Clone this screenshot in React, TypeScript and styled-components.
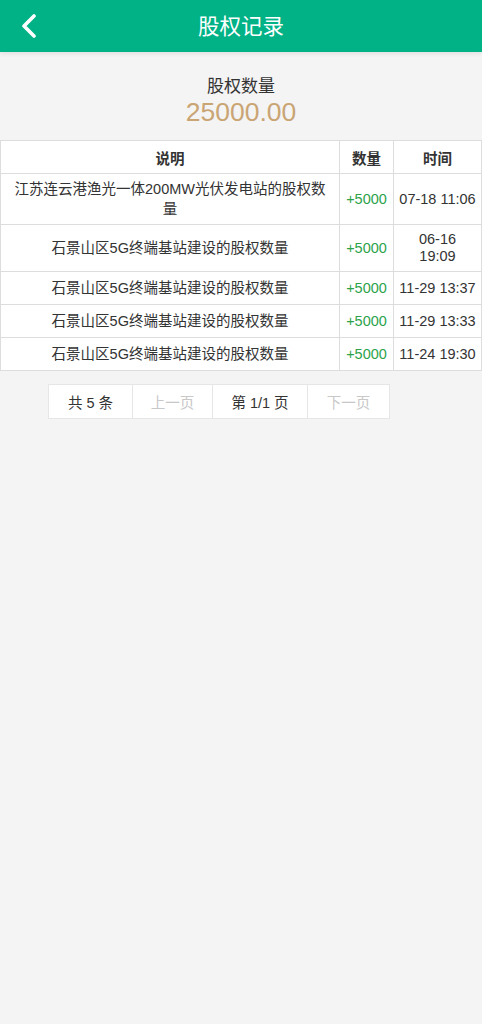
import React from "react";
import styled, { createGlobalStyle } from "styled-components";

const GlobalStyle = createGlobalStyle`
  html, body {
    margin: 0;
    padding: 0;
    background: #f4f4f4;
    font-family: "Liberation Sans", "Noto Sans CJK SC", sans-serif;
    color: #333;
  }
`;

type Row = { desc: string; amount: string; date: string; clock: string; wrap?: boolean };

const rows: Row[] = [
  { desc: "江苏连云港渔光一体200MW光伏发电站的股权数量", amount: "+5000", date: "07-18", clock: "11:06" },
  { desc: "石景山区5G终端基站建设的股权数量", amount: "+5000", date: "06-16", clock: "19:09", wrap: true },
  { desc: "石景山区5G终端基站建设的股权数量", amount: "+5000", date: "11-29", clock: "13:37" },
  { desc: "石景山区5G终端基站建设的股权数量", amount: "+5000", date: "11-29", clock: "13:33" },
  { desc: "石景山区5G终端基站建设的股权数量", amount: "+5000", date: "11-24", clock: "19:30" },
];

const App = () => {
  return (
    <Page>
      <GlobalStyle />
      <Header>
        <BackButton>
          <svg width="16" height="24" viewBox="0 0 16 24">
            <path d="M13 2 L3 12 L13 22" fill="none" stroke="#fff" strokeWidth="3.6" strokeLinecap="round" strokeLinejoin="round" />
          </svg>
        </BackButton>
        <Title>股权记录</Title>
      </Header>

      <Summary>
        <SummaryLabel>股权数量</SummaryLabel>
        <SummaryValue>25000.00</SummaryValue>
      </Summary>

      <Table>
        <colgroup>
          <col style={{ width: 339 }} />
          <col style={{ width: 54 }} />
          <col />
        </colgroup>
        <thead>
          <tr>
            <Th>说明</Th>
            <Th>数量</Th>
            <Th>时间</Th>
          </tr>
        </thead>
        <tbody>
          {rows.map((r, i) => (
            <tr key={i}>
              <DescCell>{r.desc}</DescCell>
              <AmountCell>{r.amount}</AmountCell>
              <TimeCell>
                {r.date}
                {r.wrap ? <br /> : " "}
                {r.clock}
              </TimeCell>
            </tr>
          ))}
        </tbody>
      </Table>

      <Pager>
        <PageCell $w={85}>共 5 条</PageCell>
        <PageCell $w={81} $disabled>上一页</PageCell>
        <PageCell $w={96}>第 1/1 页</PageCell>
        <PageCell $w={83} $disabled>下一页</PageCell>
      </Pager>
    </Page>
  );
};

export default App;

const Page = styled.div`
  min-height: 1024px;
  background: #f4f4f4;
`;

const Header = styled.div`
  height: 52px;
  padding-bottom: 3px;
  box-sizing: border-box;
  background: #00b286;
  display: flex;
  align-items: center;
  justify-content: center;
  position: relative;
  box-shadow: 0 2px 4px rgba(0, 0, 0, 0.08);
`;

const BackButton = styled.div`
  position: absolute;
  left: 21px;
  top: 14px;
  width: 16px;
  height: 24px;
`;

const Title = styled.div`
  color: #fff;
  font-size: 21.5px;
`;

const Summary = styled.div`
  display: flex;
  flex-direction: column;
  align-items: center;
  padding-top: 24px;
  height: 64px;
`;

const SummaryLabel = styled.div`
  font-size: 17px;
  line-height: 22px;
  color: #333;
`;

const SummaryValue = styled.div`
  font-size: 26.5px;
  line-height: 28px;
  color: #caa574;
`;

const Table = styled.table`
  width: 100%;
  border-collapse: collapse;
  table-layout: fixed;
  background: #fff;
  font-size: 14.5px;
`;

const Th = styled.th`
  border: 1px solid #ddd;
  height: 32px;
  padding: 0 4px;
  font-weight: bold;
  color: #333;
  text-align: center;
`;

const Td = styled.td`
  border: 1px solid #ddd;
  padding: 6px 4px;
  line-height: 20px;
  text-align: center;
  color: #333;
`;

const DescCell = styled(Td)`
  padding: 5px 8px;
`;

const AmountCell = styled(Td)`
  color: #2ca34a;
  padding: 6px 2px;
`;

const TimeCell = styled(Td)`
  line-height: 17px;
  padding: 6px 2px;
`;

const Pager = styled.div`
  display: flex;
  margin: 13px 0 0 49px;
`;

const PageCell = styled.div<{ $w: number; $disabled?: boolean }>`
  width: ${({ $w }) => $w}px;
  height: 35px;
  box-sizing: border-box;
  display: flex;
  align-items: center;
  justify-content: center;
  background: #fff;
  border: 1px solid #e6e6e6;
  margin-left: -1px;
  font-size: 14.5px;
  color: ${({ $disabled }) => ($disabled ? "#c8c8c8" : "#333")};
`;
